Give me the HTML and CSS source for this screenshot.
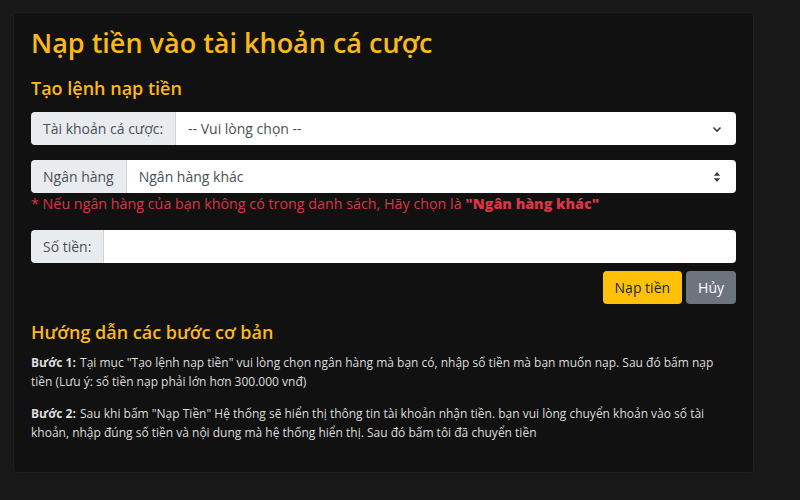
FILE: index.html
```html
<!DOCTYPE html>
<html lang="vi">
<head>
<meta charset="utf-8">
<title>Nạp tiền</title>
<link rel="stylesheet" href="styles.css">
</head>
<body>
<div class="card">
  <h1 class="title">Nạp tiền vào tài khoản cá cược</h1>
  <h2 class="subtitle">Tạo lệnh nạp tiền</h2>

  <div class="input-group">
    <span class="addon">Tài khoản cá cược:</span>
    <div class="field">
      <span class="placeholder">-- Vui lòng chọn --</span>
      <svg class="chev" width="10" height="8" viewBox="0 0 10 8"><path d="M1.5 2.5 L5 6 L8.5 2.5" fill="none" stroke="#343a40" stroke-width="1.6"/></svg>
    </div>
  </div>

  <div class="input-group g2">
    <span class="addon">Ngân hàng</span>
    <div class="field">
      <span class="value">Ngân hàng khác</span>
      <svg class="updown" width="8" height="12" viewBox="0 0 8 12"><path d="M4 1 L7.2 4.8 H0.8 Z M4 11 L7.2 7.2 H0.8 Z" fill="#343a40"/></svg>
    </div>
  </div>
  <p class="note">* Nếu ngân hàng của bạn không có trong danh sách, Hãy chọn là <strong>"Ngân hàng khác"</strong></p>

  <div class="input-group g3">
    <span class="addon">Số tiền:</span>
    <div class="field"></div>
  </div>

  <div class="actions">
    <button class="btn btn-warning">Nạp tiền</button>
    <button class="btn btn-secondary">Hủy</button>
  </div>

  <h2 class="subtitle guide">Hướng dẫn các bước cơ bản</h2>
  <p class="step"><b>Bước 1:</b> Tại mục "Tạo lệnh nạp tiền" vui lòng chọn ngân hàng mà bạn có, nhập số tiền mà bạn muốn nạp. Sau đó bấm nạp tiền (Lưu ý: số tiền nạp phải lớn hơn 300.000 vnđ)</p>
  <p class="step"><b>Bước 2:</b> Sau khi bấm "Nạp Tiền" Hệ thống sẽ hiển thị thông tin tài khoản nhận tiền. bạn vui lòng chuyển khoản vào số tài khoản, nhập đúng số tiền và nội dung mà hệ thống hiển thị. Sau đó bấm tôi đã chuyển tiền</p>
</div>
</body>
</html>
```

FILE: styles.css
```css
* { box-sizing: border-box; }
html, body { margin: 0; padding: 0; }
body {
  background: #181818;
  font-family: "Open Sans", "Noto Sans", sans-serif;
  width: 800px;
  height: 500px;
  overflow: hidden;
  padding: 12px 0 0 13px;
}
.card {
  width: 741px;
  height: 461px;
  background: #111111;
  border: 1px solid #1f1f1f;
  border-radius: 4px;
  padding: 14px 17px 0 17px;
}
.title {
  margin: 0;
  color: #fbb917;
  font-size: 27px;
  font-weight: 600;
  line-height: 32px;
}
.subtitle {
  margin: 17px 0 0 0;
  color: #fbb917;
  font-size: 18px;
  font-weight: 600;
  line-height: 24px;
}
.input-group {
  display: flex;
  height: 33px;
  margin-top: 12px;
  border-radius: 4px;
  overflow: hidden;
  font-size: 14px;
}
.g2 { margin-top: 15px; }
.g3 { margin-top: 16px; }
.addon {
  display: flex;
  align-items: center;
  padding: 0 12px;
  background: #e9ecef;
  color: #495057;
  border-right: 1px solid #ced4da;
  white-space: nowrap;
}
.field {
  flex: 1;
  background: #ffffff;
  display: flex;
  align-items: center;
  justify-content: space-between;
  padding: 0 12px;
  color: #495057;
}
.chev { margin-right: 2px; }
.updown { margin-right: 3px; }
.note {
  margin: 1px 0 0 0;
  color: #dc3545;
  font-size: 14.3px;
  line-height: 20px;
}
.note strong { font-weight: 800; }
.actions {
  display: flex;
  justify-content: flex-end;
  gap: 4px;
  margin-top: 8px;
}
.btn {
  font-family: inherit;
  font-size: 14px;
  height: 33px;
  border: none;
  border-radius: 4px;
  padding: 0 12px;
}
.btn-warning { background: #ffc107; color: #212529; }
.btn-secondary { background: #6c757d; color: #ffffff; }
.guide { margin-top: 16px; }
.step {
  margin: 9px 0 0 0;
  color: #dddddd;
  font-size: 12px;
  line-height: 19px;
}
.step + .step { margin-top: 13px; }
.step b { font-weight: 700; margin-right: 1px; }
```
